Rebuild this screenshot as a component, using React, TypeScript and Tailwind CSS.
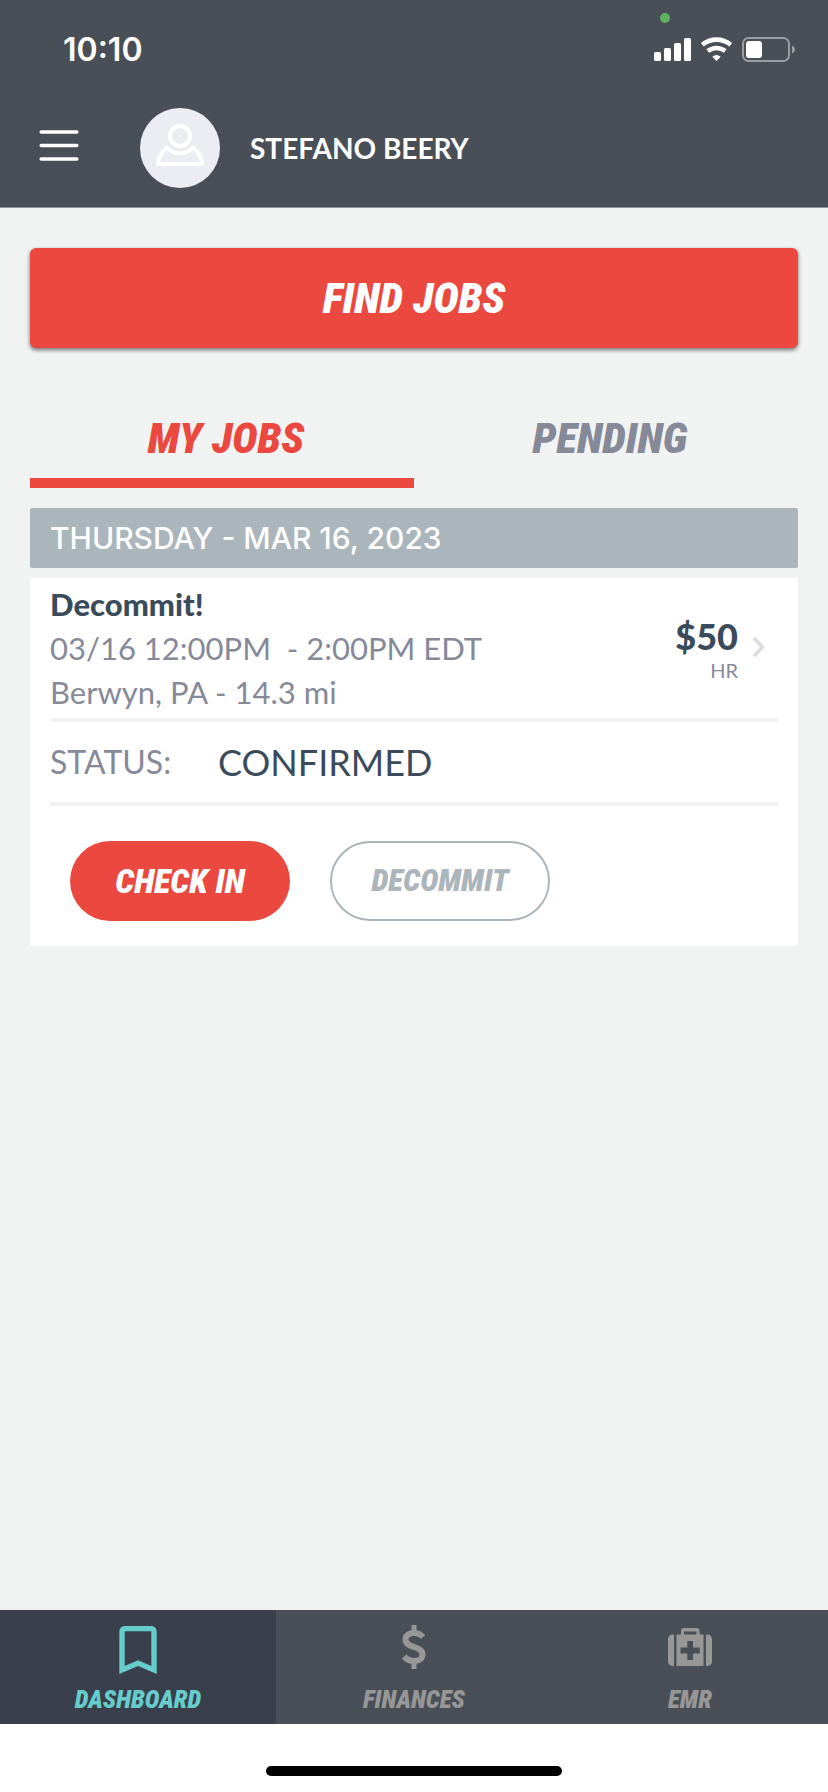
import { ReactNode, useState } from 'react'
import clsx from 'clsx'
import { MdBookmarkBorder } from 'react-icons/md'

const display =
  "font-['Roboto_Condensed','Liberation_Sans_Narrow',sans-serif] font-black italic"

interface Job {
  id: string
  title: string
  time: string
  location: string
  rate: string
  status: string
}

interface NavItem {
  label: string
  icon: ReactNode
}

const jobs: Job[] = [
  {
    id: '1',
    title: 'Decommit!',
    time: '03/16 12:00PM  - 2:00PM EDT',
    location: 'Berwyn, PA - 14.3 mi',
    rate: '$50',
    status: 'CONFIRMED',
  },
]

const tabs = ['MY JOBS', 'PENDING']

const navItems: NavItem[] = [
  { label: 'DASHBOARD', icon: <MdBookmarkBorder size={64} /> },
  { label: 'FINANCES', icon: <DollarIcon /> },
  { label: 'EMR', icon: <MedkitIcon /> },
]

function DollarIcon() {
  return (
    <svg width="64" height="64" viewBox="0 0 64 64" fill="none">
      <path
        d="M41 19C39 16.500 36 15 32 15c-5 0-8.500 2.500-8.500 6.500 0 4.500 4.500 6 8.500 7.500 4.500 1.500 8.500 3 8.500 7.500 0 4-3.500 6.500-8.500 6.500-4 0-7.300-1.500-9.800-4.500"
        stroke="currentColor"
        strokeWidth="6"
      />
      <path
        d="M32 7v7M32 44v7"
        stroke="currentColor"
        strokeWidth="5"
      />
    </svg>
  )
}

function MedkitIcon() {
  return (
    <svg width="64" height="64" viewBox="0 0 64 64" fill="currentColor">
      <path d="M16 16.5V48h-1.500a5 5 0 0 1-4.500-5V21.500a5 5 0 0 1 4.500-5z" />
      <path d="M48 16.5V48h1.500a5 5 0 0 0 4.500-5V21.500a5 5 0 0 0-4.500-5z" />
      <path
        fillRule="evenodd"
        d="M18.500 16.500H23V13a3 3 0 0 1 3-3h12.500a3 3 0 0 1 3 3v3.500h4V48h-27zM26 13.500v3h12.500v-3zM29.300 23v6.500h-6.800v6h6.800V42h5.700v-6.500h6.800v-6H35V23z"
      />
    </svg>
  )
}

function StatusBar() {
  return (
    <div className="relative flex h-[100px] items-center justify-between pr-8 pl-[63px]">
      <span className="font-['Inter',sans-serif] text-[32px] leading-10 font-semibold">
        10:10
      </span>
      <span className="absolute top-[13px] right-[158px] size-[10px] rounded-full bg-[#5fb15f]" />
      <svg width="142" height="26" viewBox="0 0 142 26" fill="#fff">
        <rect x="0" y="15" width="7" height="9" rx="1.500" />
        <rect x="10" y="11" width="7" height="13" rx="1.500" />
        <rect x="20" y="6" width="7" height="18" rx="1.500" />
        <rect x="30" y="1" width="7" height="23" rx="1.500" />
        <g fill="none" stroke="#fff">
          <path d="M48.300 7.800a22 22 0 0 1 28.400 0" strokeWidth="4.600" />
          <path d="M53.800 14a14 14 0 0 1 17.400 0" strokeWidth="4.400" />
        </g>
        <path d="M62.500 24l-4.200-4.300a6.500 6.500 0 0 1 8.400 0z" />
        <rect
          x="89"
          y="1"
          width="46"
          height="23"
          rx="5.500"
          fill="none"
          stroke="#9a9ea3"
          strokeWidth="2"
        />
        <rect x="92" y="4" width="16" height="17" rx="3" />
        <path d="M138 8.500c4 1.500 4 6.500 0 8z" fill="#9a9ea3" />
      </svg>
    </div>
  )
}

function Header() {
  return (
    <header className="border-b border-[#8f949a] bg-[#494f56] pb-[11px] text-white">
      <StatusBar />
      <div className="flex h-24 items-center pl-[39px]">
        <button type="button" aria-label="Menu" className="mr-[61px]">
          <svg width="40" height="36" viewBox="0 0 40 36" stroke="#fff">
            <path
              d="M2.200 2h35.600M2.200 15.500h35.600M2.200 29h35.600"
              strokeWidth="3.500"
              strokeLinecap="round"
            />
          </svg>
        </button>
        <svg width="80" height="80" viewBox="0 0 80 80" className="mr-[30px]">
          <circle cx="40" cy="40" r="40" fill="#ecedf3" />
          <g fill="none" stroke="#fff" strokeWidth="4">
            <circle cx="40" cy="28" r="10" />
            <path d="M27 39.500c-5 4-8.500 9.500-9 16.500h44c-.5-7-4-12.500-9-16.500-7.500 8-18.500 8-26 0z" />
          </g>
        </svg>
        <span className="text-[28px] leading-9 font-bold">STEFANO BEERY</span>
      </div>
    </header>
  )
}

function JobCard({ job }: { job: Job }) {
  return (
    <article className="mt-[10px] bg-white px-5">
      <div className="flex items-center justify-between border-b-4 border-[#f2f2f2] py-1 pr-3">
        <div className="text-[31px] leading-[44px] text-[#868998]">
          <h2 className="font-black text-[#3a4b5c]">{job.title}</h2>
          <p className="whitespace-pre">{job.time}</p>
          <p>{job.location}</p>
        </div>
        <div className="flex items-center gap-[14px]">
          <div className="text-right">
            <p className="text-[36px] leading-[44px] font-black text-[#3a4b5c]">
              {job.rate}
            </p>
            <p className="text-[20px] leading-6 text-[#868998]">HR</p>
          </div>
          <svg width="14" height="22" viewBox="0 0 14 22" fill="none">
            <path d="M2 1l8.500 9L2 19" stroke="#dcdcdc" strokeWidth="3.500" />
          </svg>
        </div>
      </div>

      <div className="flex h-[84px] items-center border-b-4 border-[#f2f2f2]">
        <span className="w-[168px] text-[32px] text-[#868998]">STATUS:</span>
        <span className="text-[36px] text-[#3a4b5c]">{job.status}</span>
      </div>

      <div className="flex gap-10 px-5 pt-[35px] pb-[25px]">
        <button
          type="button"
          className={clsx(
            display,
            'h-20 w-[220px] rounded-full bg-[#eb4840] text-[34px] text-white',
          )}
        >
          CHECK IN
        </button>
        <button
          type="button"
          className={clsx(
            display,
            'h-20 w-[220px] rounded-full border-2 border-[#abb5bc] text-[31px] text-[#abb5bc]',
          )}
        >
          DECOMMIT
        </button>
      </div>
    </article>
  )
}

export default function App() {
  const [tab, setTab] = useState('MY JOBS')
  const [page, setPage] = useState('DASHBOARD')

  return (
    <div className="flex min-h-screen flex-col bg-[#f1f3f3] font-['Lato',sans-serif]">
      <Header />

      <main className="flex-1 px-[30px] pt-10">
        <button
          type="button"
          className={clsx(
            display,
            'h-[100px] w-full rounded-md bg-[#eb4840] text-[43px] text-white shadow-[0_2px_4px_rgba(0,0,0,0.55)]',
          )}
        >
          FIND JOBS
        </button>

        <div className="mt-10 flex">
          {tabs.map((name) => (
            <button
              key={name}
              type="button"
              onClick={() => setTab(name)}
              className={clsx(
                display,
                'h-[100px] flex-1 border-b-10 pt-[10px] pl-2 text-[43px]',
                tab === name
                  ? 'border-[#eb4840] text-[#eb4840]'
                  : 'border-transparent text-[#868998]',
              )}
            >
              {name}
            </button>
          ))}
        </div>

        <h1 className="mt-5 rounded-xs bg-[#abb5bc] px-5 font-['Inter',sans-serif] text-[30px] leading-[60px] font-medium text-white">
          THURSDAY - MAR 16, 2023
        </h1>

        {jobs.map((job) => (
          <JobCard key={job.id} job={job} />
        ))}
      </main>

      <nav className="flex bg-[#494f56]">
        {navItems.map((item) => (
          <button
            key={item.label}
            type="button"
            onClick={() => setPage(item.label)}
            className={clsx(
              'flex flex-1 flex-col items-center pt-2 pb-[6px]',
              page === item.label
                ? 'bg-[#3a404b] text-[#66cccc]'
                : 'text-[#979797]',
            )}
          >
            <span className="flex h-16 items-center">{item.icon}</span>
            <span className={clsx(display, 'text-[25px] leading-9')}>
              {item.label}
            </span>
          </button>
        ))}
      </nav>

      <div className="flex justify-center bg-white pt-[42px] pb-4">
        <div className="h-[10px] w-[296px] rounded-full bg-black" />
      </div>
    </div>
  )
}
